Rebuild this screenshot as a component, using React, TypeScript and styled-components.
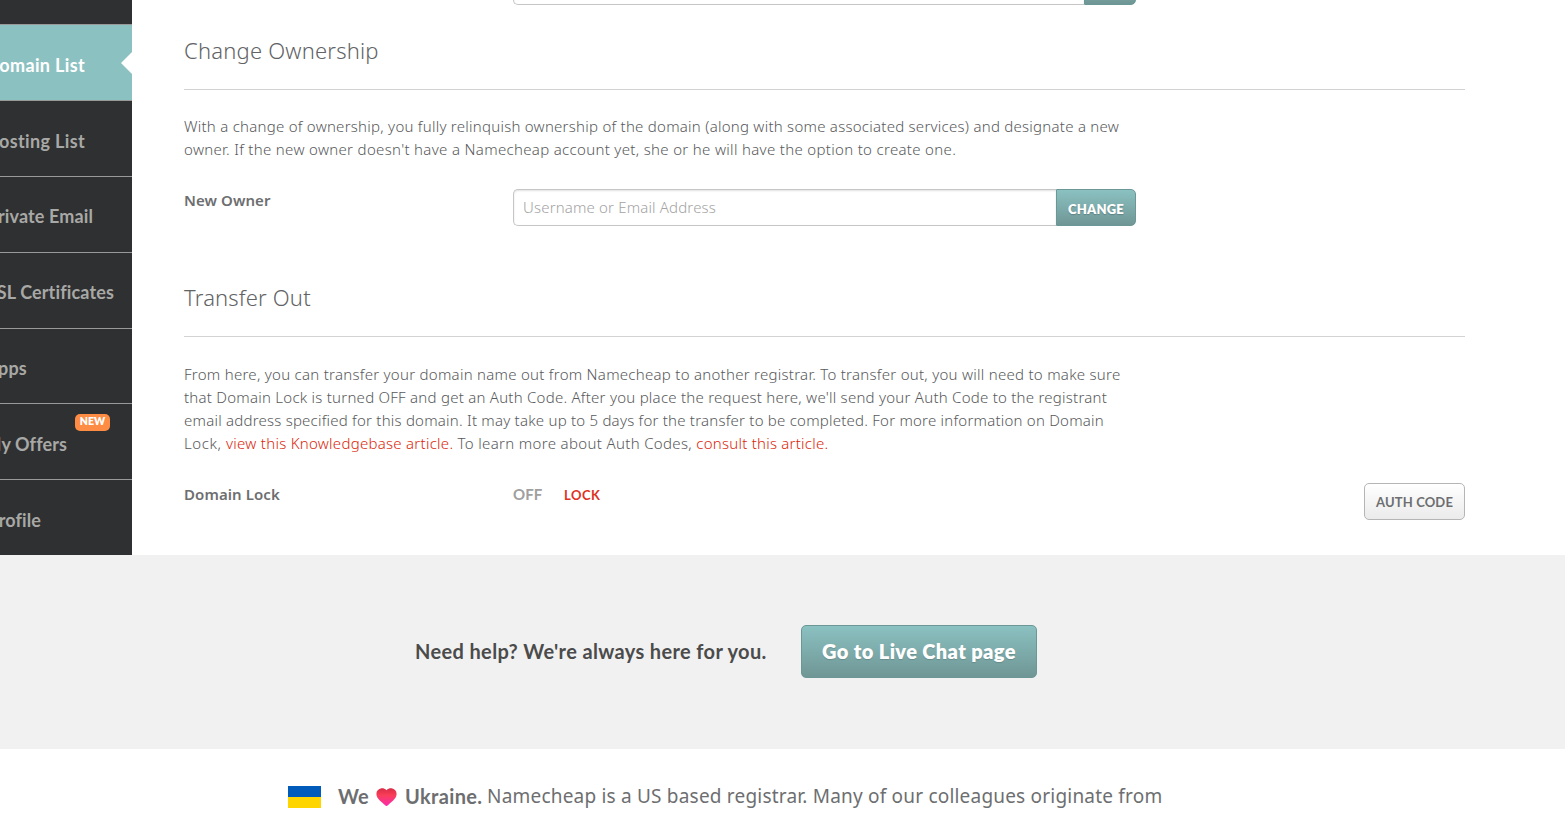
import React from "react";
import styled, { createGlobalStyle } from "styled-components";

const GlobalStyle = createGlobalStyle`
  * { box-sizing: border-box; }
  html, body { margin: 0; padding: 0; }
  body {
    background: #fff;
    color: #6d6e70;
    font-family: "Noto Sans", "Open Sans", sans-serif;
    overflow: hidden;
  }
`;

const Page = styled.div`
  width: 100%;
  height: 815px;
  overflow: hidden;
`;

const Columns = styled.div`
  display: flex;
  height: 555px;
`;

const Sidebar = styled.nav`
  flex: none;
  width: 132px;
  padding-top: 24px;
  background: #2f3031;
  overflow: hidden;
`;

const NavItem = styled.a<{ $active?: boolean; $height?: number; $lift?: number }>`
  position: relative;
  display: flex;
  align-items: center;
  justify-content: flex-start;
  height: ${(p) => p.$height ?? 76}px;
  padding-top: ${(p) => 4 - (p.$lift ?? 0)}px;
  border-top: 1px solid #999;
  background: ${(p) => (p.$active ? "#8cc1c1" : "transparent")};
  color: ${(p) => (p.$active ? "#fff" : "#a8a8a6")};
  font: 700 18px/24px Lato, sans-serif;
  white-space: nowrap;
`;

const NavLabel = styled.span<{ $end: number; $spacing: number }>`
  flex: none;
  display: flex;
  justify-content: flex-end;
  width: ${(p) => p.$end}px;
  letter-spacing: ${(p) => p.$spacing}px;
`;

const ActiveArrow = styled.svg`
  position: absolute;
  right: 0;
  top: 27px;
`;

const Badge = styled.span`
  position: absolute;
  left: 75px;
  top: 10px;
  width: 35px;
  height: 17px;
  border-radius: 5px;
  background: #ff8c44;
  color: #fff;
  font: 800 10.5px/15px Lato, sans-serif;
  text-align: center;
`;

const Content = styled.main`
  flex: 1;
  padding: 0 100px 0 52px;
`;

const PreviousRow = styled.div`
  display: flex;
  align-items: flex-end;
  height: 5px;
  margin-left: 329px;
  margin-bottom: 30px;
  overflow: hidden;
`;

const Section = styled.section`
  margin-bottom: 56px;
`;

const Title = styled.h2<{ $spacing: number }>`
  margin: 0;
  padding-bottom: 24px;
  border-bottom: 1px solid #d3d3d3;
  color: #626365;
  font-size: 22px;
  font-weight: 300;
  line-height: 30px;
  letter-spacing: ${(p) => p.$spacing}px;
`;

const Copy = styled.p<{ $top: number }>`
  margin: ${(p) => p.$top}px 0 28px;
  color: #58595b;
  font-size: 15px;
  font-weight: 300;
  line-height: 23px;
  white-space: nowrap;
`;

const Line = styled.span<{ $spacing: number }>`
  display: block;
  letter-spacing: ${(p) => p.$spacing}px;
`;

const Link = styled.a<{ $spacing: number }>`
  color: #dc1f0c;
  letter-spacing: ${(p) => p.$spacing}px;
`;

const Run = styled.span<{ $spacing: number }>`
  letter-spacing: ${(p) => p.$spacing}px;
`;

const Row = styled.div`
  display: flex;
  align-items: flex-start;
  height: 37px;
`;

const Label = styled.label`
  flex: none;
  width: 329px;
  font-size: 15px;
  font-weight: 600;
  line-height: 23px;
  letter-spacing: 0.08px;
`;

const InputGroup = styled.div`
  display: flex;
  flex: none;
  width: 623px;
  height: 37px;
`;

const Input = styled.input`
  flex: 1;
  min-width: 0;
  height: 37px;
  padding: 0 9px 2px;
  border: 1px solid #c6c6c6;
  border-right: 0;
  border-radius: 5px 0 0 5px;
  outline: 0;
  background: #fff;
  box-shadow: inset 0 1px 2px rgba(0, 0, 0, 0.12);
  font: 300 15px/23px "Noto Sans", sans-serif;
  letter-spacing: 0.16px;
  &::placeholder {
    color: #a3a3a3;
    opacity: 1;
  }
`;

const GroupButton = styled.button<{ $width: number }>`
  flex: none;
  width: ${(p) => p.$width}px;
  height: 37px;
  padding: 2px 0 0;
  border: 1px solid #6b9796;
  border-radius: 0 5px 5px 0;
  background: linear-gradient(#8bc1c1, #6f9695);
  color: #fff;
  font: 800 13px/16px Lato, sans-serif;
  letter-spacing: 0.2px;
  text-shadow: 0 1px 1px rgba(0, 0, 0, 0.2);
`;

const State = styled.span`
  width: 51px;
  color: #a0a0a0;
  font: 700 15px/23px Lato, sans-serif;
  letter-spacing: 0.1px;
`;

const LockLink = styled.a`
  color: #e0301e;
  font: 700 13px/25px Lato, sans-serif;
  letter-spacing: 0.5px;
`;

const AuthButton = styled.button`
  width: 101px;
  height: 37px;
  margin-left: auto;
  padding: 0;
  border: 1px solid #b5b5b5;
  border-radius: 5px;
  background: linear-gradient(#fff, #ebebeb);
  color: #6d6e70;
  font: 700 13px/16px Lato, sans-serif;
  letter-spacing: 0.15px;
`;

const Help = styled.section`
  display: flex;
  align-items: flex-start;
  height: 194px;
  padding: 70px 0 0 414px;
  background: #f1f1f1;
`;

const HelpText = styled.p`
  width: 387px;
  margin: 0;
  padding: 14px 0 0 1px;
  color: #4b4b4b;
  font: 700 20px/24px Lato, sans-serif;
  letter-spacing: 0.36px;
`;

const ChatButton = styled.button`
  width: 236px;
  height: 53px;
  padding: 0 0 1px;
  border: 1px solid #6b9796;
  border-radius: 5px;
  background: linear-gradient(#8bc1c1, #6f9695);
  color: #fff;
  font: 800 20px/24px Lato, sans-serif;
  letter-spacing: 0.38px;
  text-shadow: 0 1px 1px rgba(0, 0, 0, 0.15);
`;

const Ukraine = styled.footer`
  display: flex;
  align-items: flex-start;
  height: 66px;
  padding: 34px 0 0 288px;
  font: 400 20px/26px Lato, sans-serif;
  white-space: nowrap;
`;

const Flag = styled.svg`
  flex: none;
  margin: 3px 17px 0 0;
`;

const Strong = styled.strong<{ $width: number; $spacing: number }>`
  flex: none;
  width: ${(p) => p.$width}px;
  font-weight: 700;
  letter-spacing: ${(p) => p.$spacing}px;
`;

const Heart = styled.svg`
  flex: none;
  margin: 5px 8px 0 0;
`;

const Message = styled.span`
  padding-top: 1px;
  font: 400 19px/25px "Noto Sans", sans-serif;
  letter-spacing: 0.2px;
`;

const menu = [
  { label: "Domain List", end: 85, spacing: 0.35, active: true },
  { label: "Hosting List", end: 85, spacing: 0.35 },
  { label: "Private Email", end: 93, spacing: 0.12, lift: 2 },
  { label: "SSL Certificates", end: 114, spacing: 0.14, lift: 2 },
  { label: "Apps", end: 27, spacing: 0.2, height: 75 },
  { label: "My Offers", end: 67, spacing: 0.1, badge: "NEW" },
  { label: "Profile", end: 41, spacing: 0.1 },
];

export default function App() {
  return (
    <Page>
      <GlobalStyle />
      <Columns>
        <Sidebar>
          {menu.map((m) => (
            <NavItem key={m.label} $active={m.active} $height={m.height} $lift={m.lift}>
              <NavLabel $end={m.end} $spacing={m.spacing}>{m.label}</NavLabel>
              {m.badge && <Badge>{m.badge}</Badge>}
              {m.active && (
                <ActiveArrow width="11" height="22" viewBox="0 0 11 22">
                  <path d="M11 0L0 11l11 11z" fill="#fff" />
                </ActiveArrow>
              )}
            </NavItem>
          ))}
        </Sidebar>
        <Content>
          <PreviousRow>
            <InputGroup>
              <Input />
              <GroupButton $width={52} />
            </InputGroup>
          </PreviousRow>
          <Section>
            <Title $spacing={0.2}>Change Ownership</Title>
            <Copy $top={25}>
              <Line $spacing={0.255}>
                With a change of ownership, you fully relinquish ownership of the domain (along with some associated services) and designate a new
              </Line>
              <Line $spacing={0.325}>
                owner. If the new owner doesn't have a Namecheap account yet, she or he will have the option to create one.
              </Line>
            </Copy>
            <Row>
              <Label>New Owner</Label>
              <InputGroup>
                <Input placeholder="Username or Email Address" />
                <GroupButton $width={80}>CHANGE</GroupButton>
              </InputGroup>
            </Row>
          </Section>
          <Section>
            <Title $spacing={0.16}>Transfer Out</Title>
            <Copy $top={26}>
              <Line $spacing={0.271}>
                From here, you can transfer your domain name out from Namecheap to another registrar. To transfer out, you will need to make sure
              </Line>
              <Line $spacing={0.245}>
                that Domain Lock is turned OFF and get an Auth Code. After you place the request here, we'll send your Auth Code to the registrant
              </Line>
              <Line $spacing={0.225}>
                email address specified for this domain. It may take up to 5 days for the transfer to be completed. For more information on Domain
              </Line>
              <Line $spacing={0.6}>
                Lock, <Link $spacing={0.27}>view this Knowledgebase article.</Link>
                <Run $spacing={0.34}> To learn more about Auth Codes, </Run>
                <Link $spacing={0.24}>consult this article.</Link>
              </Line>
            </Copy>
            <Row>
              <Label>Domain Lock</Label>
              <State>OFF</State>
              <LockLink>LOCK</LockLink>
              <AuthButton>AUTH CODE</AuthButton>
            </Row>
          </Section>
        </Content>
      </Columns>
      <Help>
        <HelpText>Need help? We're always here for you.</HelpText>
        <ChatButton>Go to Live Chat page</ChatButton>
      </Help>
      <Ukraine>
        <Flag width="33" height="22" viewBox="0 0 33 22">
          <path fill="#005bbb" d="M0 0h33v11H0z" />
          <path fill="#ffd500" d="M0 11h33v11H0z" />
        </Flag>
        <Strong $width={38} $spacing={0.2}>We</Strong>
        <Heart width="21" height="18" viewBox="0 0 21 18">
          <defs>
            <linearGradient id="heart" x1="0" y1="0" x2="0" y2="1">
              <stop offset="0" stopColor="#d92b45" />
              <stop offset="0.4" stopColor="#f93e58" />
              <stop offset="1" stopColor="#fb2bb0" />
            </linearGradient>
          </defs>
          <path
            fill="url(#heart)"
            d="M10.5 2.2C9 .3 6.9 0 5.4.2 2.3.7.3 3 .4 6.1c.1 5 5.4 7.8 8.7 11.2.9.9 1.9.9 2.8 0 3.3-3.4 8.6-6.2 8.7-11.2C20.700 3 18.700.7 15.600.2 14.100 0 12 .3 10.500 2.200z"
          />
        </Heart>
        <Strong $width={82} $spacing={0.35}>Ukraine.</Strong>
        <Message>Namecheap is a US based registrar. Many of our colleagues originate from</Message>
      </Ukraine>
    </Page>
  );
}
